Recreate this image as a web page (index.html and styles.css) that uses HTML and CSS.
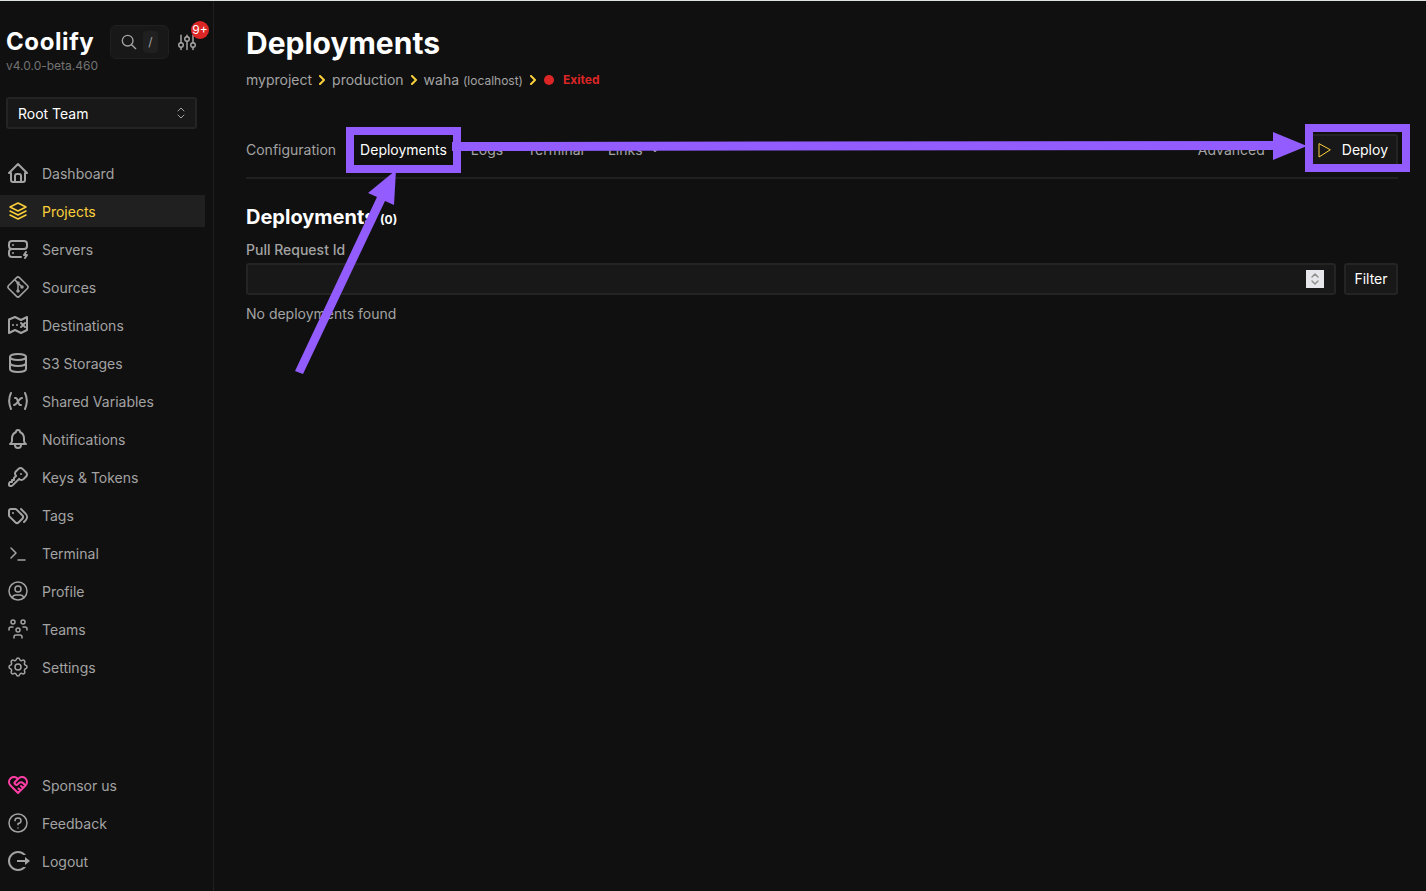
FILE: index.html
```html
<!DOCTYPE html>
<html lang="en">
<head>
    <meta charset="UTF-8">
    <meta name="viewport" content="width=device-width, initial-scale=1.0">
    <title>Deployments | Coolify</title>
    <link rel="stylesheet" href="styles.css">
</head>
<body>
    <aside class="sidebar">
        <div class="brand-row">
            <div class="brand">
                <a href="#" class="brand-name">Coolify</a>
                <span class="version">v4.0.0-beta.460</span>
            </div>
            <button class="search-button" aria-label="Search">
                <svg width="16" height="16" viewBox="0 0 24 24"><circle cx="10" cy="10" r="8"/><path d="M16 16l6 6"/></svg>
                <kbd>/</kbd>
            </button>
            <button class="tune-button" aria-label="Preferences">
                <svg width="18" height="18" viewBox="0 0 24 24"><path d="M4 3v10M4 19v3M12 3v2M12 11v11M20 3v10M20 19v3"/><circle cx="4" cy="16" r="3"/><circle cx="12" cy="8" r="3"/><circle cx="20" cy="16" r="3"/></svg>
                <span class="badge">9+</span>
            </button>
        </div>

        <select class="team-select" aria-label="Team">
            <option>Root Team</option>
        </select>

        <nav class="menu">
            <a href="#" class="menu-item">
                <svg viewBox="0 0 24 24"><path d="M5 12H3l9-9l9 9h-2M5 12v7a2 2 0 0 0 2 2h10a2 2 0 0 0 2-2v-7M9 21v-6a2 2 0 0 1 2-2h2a2 2 0 0 1 2 2v6"/></svg>
                Dashboard
            </a>
            <a href="#" class="menu-item active">
                <svg class="thin" viewBox="0 0 24 24"><path d="M12 4l-8 4l8 4l8-4zM4 12l8 4l8-4M4 16l8 4l8-4"/></svg>
                Projects
            </a>
            <a href="#" class="menu-item">
                <svg viewBox="0 0 24 24"><path d="M3 7a3 3 0 0 1 3-3h12a3 3 0 0 1 3 3v2a3 3 0 0 1-3 3H6a3 3 0 0 1-3-3zM15 20H6a3 3 0 0 1-3-3v-2a3 3 0 0 1 3-3h12M7 8v.01M7 16v.01M20 15l-2 3h3l-2 3"/></svg>
                Servers
            </a>
            <a href="#" class="menu-item">
                <svg class="thin" viewBox="0 0 24 24"><path d="M15 12a1 1 0 1 0 2 0a1 1 0 1 0-2 0M11 8a1 1 0 1 0 2 0a1 1 0 1 0-2 0M11 16a1 1 0 1 0 2 0a1 1 0 1 0-2 0M12 15V9M15 11l-2-2M11 7L9.1 5.1M13.446 2.6l7.955 7.954a2.045 2.045 0 0 1 0 2.892l-7.955 7.955a2.045 2.045 0 0 1-2.892 0l-7.955-7.955a2.045 2.045 0 0 1 0-2.892l7.955-7.955a2.045 2.045 0 0 1 2.892 0z"/></svg>
                Sources
            </a>
            <a href="#" class="menu-item">
                <svg viewBox="0 0 24 24"><path d="M3 6.500l6-2.500l6 3l6-3v13l-6 3l-6-3l-6 3zM7 12v.01M11 12v.01M15 10l4 4M19 10l-4 4"/></svg>
                Destinations
            </a>
            <a href="#" class="menu-item">
                <svg viewBox="0 0 24 24"><ellipse cx="12" cy="6" rx="8" ry="3"/><path d="M4 6v6a8 3 0 0 0 16 0V6M4 12v6a8 3 0 0 0 16 0v-6"/></svg>
                S3 Storages
            </a>
            <a href="#" class="menu-item">
                <svg viewBox="0 0 24 24"><path d="M5 4C2.500 9 2.500 14 5 20M19 4c2.500 5 2.500 10 0 16M9 9h1c1 0 1 1 2.016 3.527C13 15 13 16 14 16h1M8 16c1.500 0 3-2 4-3.500S14.500 9 16 9"/></svg>
                Shared Variables
            </a>
            <a href="#" class="menu-item">
                <svg viewBox="0 0 24 24"><path d="M10 5a2 2 0 1 1 4 0a7 7 0 0 1 4 6v3a4 4 0 0 0 2 3H4a4 4 0 0 0 2-3v-3a7 7 0 0 1 4-6M9 17v1a3 3 0 0 0 6 0v-1"/></svg>
                Notifications
            </a>
            <a href="#" class="menu-item">
                <svg viewBox="0 0 24 24"><path d="M16.555 3.843l3.602 3.602a2.877 2.877 0 0 1 0 4.069l-2.643 2.643a2.877 2.877 0 0 1-4.069 0l-.301-.301l-6.558 6.558a2 2 0 0 1-1.239.578L5.172 21H4a1 1 0 0 1-.993-.883L3 20v-1.172a2 2 0 0 1 .467-1.284l.119-.13L4 17h2v-2h2v-2l2.144-2.144l-.301-.301a2.877 2.877 0 0 1 0-4.069l2.643-2.643a2.877 2.877 0 0 1 4.069 0zM15 9h.01"/></svg>
                Keys &amp; Tokens
            </a>
            <a href="#" class="menu-item">
                <svg viewBox="0 0 24 24"><path d="M3 8v4.172a2 2 0 0 0 .586 1.414l5.710 5.710a2.410 2.410 0 0 0 3.408 0l3.592-3.592a2.410 2.410 0 0 0 0-3.408l-5.710-5.710A2 2 0 0 0 9.172 6H5a2 2 0 0 0-2 2M18 19l1.592-1.592a4.820 4.820 0 0 0 0-6.816L15 6M7 10h-.01"/></svg>
                Tags
            </a>
            <a href="#" class="menu-item">
                <svg class="thin" viewBox="0 0 24 24"><path d="M5 7l5 5l-5 5M12 19h7"/></svg>
                Terminal
            </a>
            <a href="#" class="menu-item">
                <svg class="thin" viewBox="0 0 24 24"><circle cx="12" cy="12" r="9"/><circle cx="12" cy="10" r="3"/><path d="M6.168 18.849A4 4 0 0 1 10 16h4a4 4 0 0 1 3.834 2.855"/></svg>
                Profile
            </a>
            <a href="#" class="menu-item">
                <svg class="thin" viewBox="0 0 24 24"><path d="M10 13a2 2 0 1 0 4 0a2 2 0 0 0-4 0M8 21v-1a2 2 0 0 1 2-2h4a2 2 0 0 1 2 2v1M15 5a2 2 0 1 0 4 0a2 2 0 0 0-4 0M17 10h2a2 2 0 0 1 2 2v1M5 5a2 2 0 1 0 4 0a2 2 0 0 0-4 0M3 13v-1a2 2 0 0 1 2-2h2"/></svg>
                Teams
            </a>
            <a href="#" class="menu-item">
                <svg class="thin" viewBox="0 0 24 24"><path d="M10.325 4.317c.426-1.756 2.924-1.756 3.350 0a1.724 1.724 0 0 0 2.573 1.066c1.543-.94 3.310.826 2.370 2.370a1.724 1.724 0 0 0 1.065 2.572c1.756.426 1.756 2.924 0 3.350a1.724 1.724 0 0 0-1.066 2.573c.94 1.543-.826 3.310-2.370 2.370a1.724 1.724 0 0 0-2.572 1.065c-.426 1.756-2.924 1.756-3.350 0a1.724 1.724 0 0 0-2.573-1.066c-1.543.94-3.310-.826-2.370-2.370a1.724 1.724 0 0 0-1.065-2.572c-1.756-.426-1.756-2.924 0-3.350a1.724 1.724 0 0 0 1.066-2.573c-.94-1.543.826-3.310 2.370-2.370c1 .608 2.296.070 2.572-1.065"/><circle cx="12" cy="12" r="3"/></svg>
                Settings
            </a>
        </nav>

        <nav class="menu menu-bottom">
            <a href="#" class="menu-item sponsor">
                <svg viewBox="0 0 24 24"><path d="M19.500 12.572L12 20l-7.500-7.428A5 5 0 1 1 12 6.006a5 5 0 1 1 7.500 6.572M12 6L8.707 9.293a1 1 0 0 0 0 1.414l.543.543c.69.69 1.810.69 2.500 0l1-1a3.182 3.182 0 0 1 4.500 0l2.250 2.250M12.500 15.500l2 2M15 13l2 2"/></svg>
                Sponsor us
            </a>
            <button class="menu-item">
                <svg class="thin" viewBox="0 0 24 24"><circle cx="12" cy="12" r="9"/><path d="M9 9.700c0-1.500 1.300-2.700 3-2.700s3 1.200 3 2.700s-1.300 2.600-3 2.700v1.300M12 17v.01"/></svg>
                Feedback
            </button>
            <button class="menu-item">
                <svg class="solid" viewBox="0 0 24 24"><path d="M12 22C6.477 22 2 17.523 2 12S6.477 2 12 2a9.985 9.985 0 0 1 8 4h-2.710a8 8 0 1 0 .001 12h2.710A9.985 9.985 0 0 1 12 22m7-6v-3h-8v-2h8V8l5 4z"/></svg>
                Logout
            </button>
        </nav>
    </aside>

    <main>
        <h1>Deployments</h1>
        <div class="breadcrumbs">
            <a href="#">myproject</a>
            <svg class="crumb-arrow" viewBox="0 0 8 10"><path d="M2 1l4 4l-4 4"/></svg>
            <a href="#">production</a>
            <svg class="crumb-arrow" viewBox="0 0 8 10"><path d="M2 1l4 4l-4 4"/></svg>
            <a href="#">waha <small>(localhost)</small></a>
            <svg class="crumb-arrow" viewBox="0 0 8 10"><path d="M2 1l4 4l-4 4"/></svg>
            <span class="status">Exited</span>
        </div>

        <div class="tab-bar">
            <nav class="tabs">
                <a href="#">Configuration</a>
                <a href="#" class="current highlight">Deployments</a>
                <a href="#">Logs</a>
                <a href="#">Terminal</a>
                <a href="#" class="links">Links
                    <svg width="12" height="12" viewBox="0 0 12 12"><path d="M3 4l3 3l3-3"/></svg>
                </a>
            </nav>
            <button class="advanced">Advanced</button>
            <button class="button deploy highlight">
                <svg width="14" height="16" viewBox="0 0 14 16"><path d="M2 2v13l11-7z"/></svg>
                Deploy
            </button>

            <!-- Arrow from the tab to the deploy button -->
            <div class="arrow-across">
                <svg class="arrow-line" viewBox="0 0 100 12" preserveAspectRatio="none"><path d="M0 2L100 1V10L0 11z"/></svg>
                <svg class="arrow-head" viewBox="0 0 34 28"><path d="M0 0l34 14l-34 14z"/></svg>
            </div>
        </div>

        <h2>Deployments <small>(0)</small></h2>
        <form class="filter">
            <div class="field">
                <label for="pull-request-id">Pull Request Id</label>
                <input type="number" id="pull-request-id">
                <svg class="spinner" viewBox="0 0 18 18"><path d="M6 7l3-3l3 3M6 11l3 3l3-3"/></svg>
            </div>
            <button type="submit" class="button">Filter</button>
        </form>
        <p class="empty">No deployments found</p>

        <!-- Arrow pointing at the deployments tab -->
        <svg class="arrow-up" viewBox="0 0 106 206"><path d="M0 201L82 27L73 23L101 0L99 35L90 31L8 204z"/></svg>
    </main>
</body>
</html>
```
FILE: styles.css
```css
* {
    box-sizing: border-box;
}
body {
    display: flex;
    min-height: 100vh;
    margin: 0;
    border-top: 1px solid #dfe3df;
    background-color: #101010;
    color: #a3a3a3;
    font-family: Inter, sans-serif;
    font-size: 14px;
    line-height: 20px;
}
a {
    color: inherit;
    text-decoration: none;
}
button, input, select {
    font: inherit;
}
svg {
    flex-shrink: 0;
    fill: none;
    stroke: currentColor;
    stroke-width: 2;
    stroke-linecap: round;
    stroke-linejoin: round;
}

/* Sidebar */
.sidebar {
    display: flex;
    flex-direction: column;
    flex-shrink: 0;
    width: 214px;
    padding: 24px 8px 14px 0;
    border-right: 1px solid #202020;
}
.brand-row {
    display: flex;
    align-items: flex-start;
    padding-left: 6px;
}
.brand {
    display: flex;
    flex-direction: column;
    width: 104px;
    padding-top: 1px;
}
.brand-name {
    color: #fff;
    font-size: 24px;
    font-weight: 700;
    line-height: 32px;
    letter-spacing: 0.025em;
}
.version {
    color: #737373;
    font-size: 12px;
    line-height: 16px;
}
.search-button {
    display: flex;
    align-items: center;
    gap: 6px;
    height: 34px;
    padding: 0 10px;
    border: 1px solid #202020;
    border-radius: 6px;
    background-color: #181818;
    color: #a3a3a3;
}
.search-button kbd {
    min-width: 15px;
    padding: 2px 5px;
    border-radius: 4px;
    background-color: #202020;
    font-family: inherit;
    font-size: 12px;
    line-height: 18px;
}
.tune-button {
    position: relative;
    height: 34px;
    padding: 0;
    margin-left: 9px;
    border: 0;
    background: none;
    color: #a3a3a3;
}
.tune-button svg {
    display: block;
}
.badge {
    position: absolute;
    top: -4px;
    right: -13px;
    width: 18px;
    height: 18px;
    border-radius: 50%;
    background-color: #dc2626;
    color: #fff;
    font-size: 12px;
    line-height: 18px;
    text-align: center;
}
.team-select {
    height: 32px;
    margin: 23px 8px 0 6px;
    padding: 1px 10px 0;
    border: 2px solid #242424;
    border-radius: 3px;
    appearance: none;
    background: #181818 url("data:image/svg+xml,%3Csvg xmlns='http://www.w3.org/2000/svg' width='10' height='14' fill='none' stroke='%23a3a3a3' stroke-linecap='round'%3E%3Cpath d='M2 5l3-3l3 3M2 9l3 3l3-3'/%3E%3C/svg%3E") no-repeat right 9px center;
    color: #fff;
}
.menu {
    display: flex;
    flex-direction: column;
    gap: 6px;
    margin-top: 28px;
}
.menu-bottom {
    margin-top: auto;
}
.menu-item {
    display: flex;
    align-items: center;
    gap: 12px;
    height: 32px;
    padding: 2px 6px 0;
    border: 0;
    background: none;
    color: #a3a3a3;
}
.menu-item svg {
    width: 24px;
    height: 24px;
    margin-bottom: 2px;
}
.menu-item .thin {
    stroke-width: 1.5;
}
.menu-item .solid {
    fill: currentColor;
    stroke: none;
}
.menu-item.active {
    background-color: #202020;
    color: #fcd03a;
}
.sponsor svg {
    color: #ff3ea5;
}

/* Page */
main {
    position: relative;
    flex: 1;
    padding: 24px 28px 24px 32px;
}
h1 {
    margin: 0;
    color: #fff;
    font-size: 30px;
    font-weight: 700;
    line-height: 36px;
}
.breadcrumbs {
    display: flex;
    align-items: center;
    gap: 6px;
    margin-top: 9px;
}
.breadcrumbs small {
    font-size: 12px;
    line-height: 16px;
}
.crumb-arrow {
    width: 8px;
    height: 10px;
    color: #fcd03a;
}
.status {
    display: flex;
    align-items: center;
    gap: 9px;
    margin-left: 1px;
    color: #dc2626;
    font-size: 12px;
    font-weight: 700;
}
.status::before {
    content: "";
    width: 10px;
    height: 10px;
    border-radius: 50%;
    background-color: #dc2626;
}
.tab-bar {
    position: relative;
    display: flex;
    align-items: center;
    margin-top: 44px;
    padding-bottom: 11px;
    border-bottom: 2px solid #202020;
}
.tabs {
    display: flex;
    flex: 1;
    gap: 24px;
}
.tabs .current {
    color: #fff;
}
.links {
    display: flex;
    align-items: center;
    gap: 6px;
}
.advanced {
    margin-right: 42px;
    padding: 0;
    border: 0;
    background: none;
    color: inherit;
}
.button {
    display: flex;
    align-items: center;
    justify-content: center;
    min-width: 54px;
    height: 32px;
    padding: 0 8px;
    border: 2px solid #242424;
    border-radius: 3px;
    background-color: #181818;
    color: #fff;
}
.deploy {
    gap: 11px;
}
.deploy svg {
    color: #fcd03a;
    stroke-width: 1;
}
h2 {
    margin: 24px 0 0;
    color: #fff;
    font-size: 20px;
    font-weight: 700;
    line-height: 28px;
}
h2 small {
    font-size: 12px;
}
.filter {
    display: flex;
    align-items: flex-end;
    gap: 8px;
    margin-top: 6px;
}
.field {
    position: relative;
    display: flex;
    flex: 1;
    flex-direction: column;
    gap: 3px;
}
.field label {
    font-weight: 500;
}
.field input {
    width: 100%;
    height: 32px;
    padding: 0 40px 0 8px;
    border: 2px solid #242424;
    border-radius: 3px;
    appearance: textfield;
    background-color: #181818;
    color: #fff;
}
.spinner {
    position: absolute;
    right: 12px;
    bottom: 7px;
    width: 18px;
    height: 18px;
    background-color: #e8e8ec;
    color: #909090;
    stroke-width: 1.5;
}
.empty {
    margin: 9px 0 0;
}

/* Purple callouts drawn over the page */
.highlight {
    position: relative;
}
.highlight::after {
    content: "";
    position: absolute;
    inset: -13px -14px;
    border: 8px solid #925cff;
}
.deploy.highlight::after {
    inset: -12px -14px -8px -4px;
}
.arrow-across {
    position: absolute;
    top: -2px;
    right: 91px;
    left: 206px;
    display: flex;
    align-items: center;
}
.arrow-across svg, .arrow-up {
    fill: #925cff;
    stroke: none;
}
.arrow-line {
    flex: 1;
    min-width: 0;
    height: 12px;
}
.arrow-head {
    width: 34px;
    height: 28px;
}
.arrow-up {
    position: absolute;
    top: 169px;
    left: 81px;
    width: 106px;
    height: 206px;
}
```
